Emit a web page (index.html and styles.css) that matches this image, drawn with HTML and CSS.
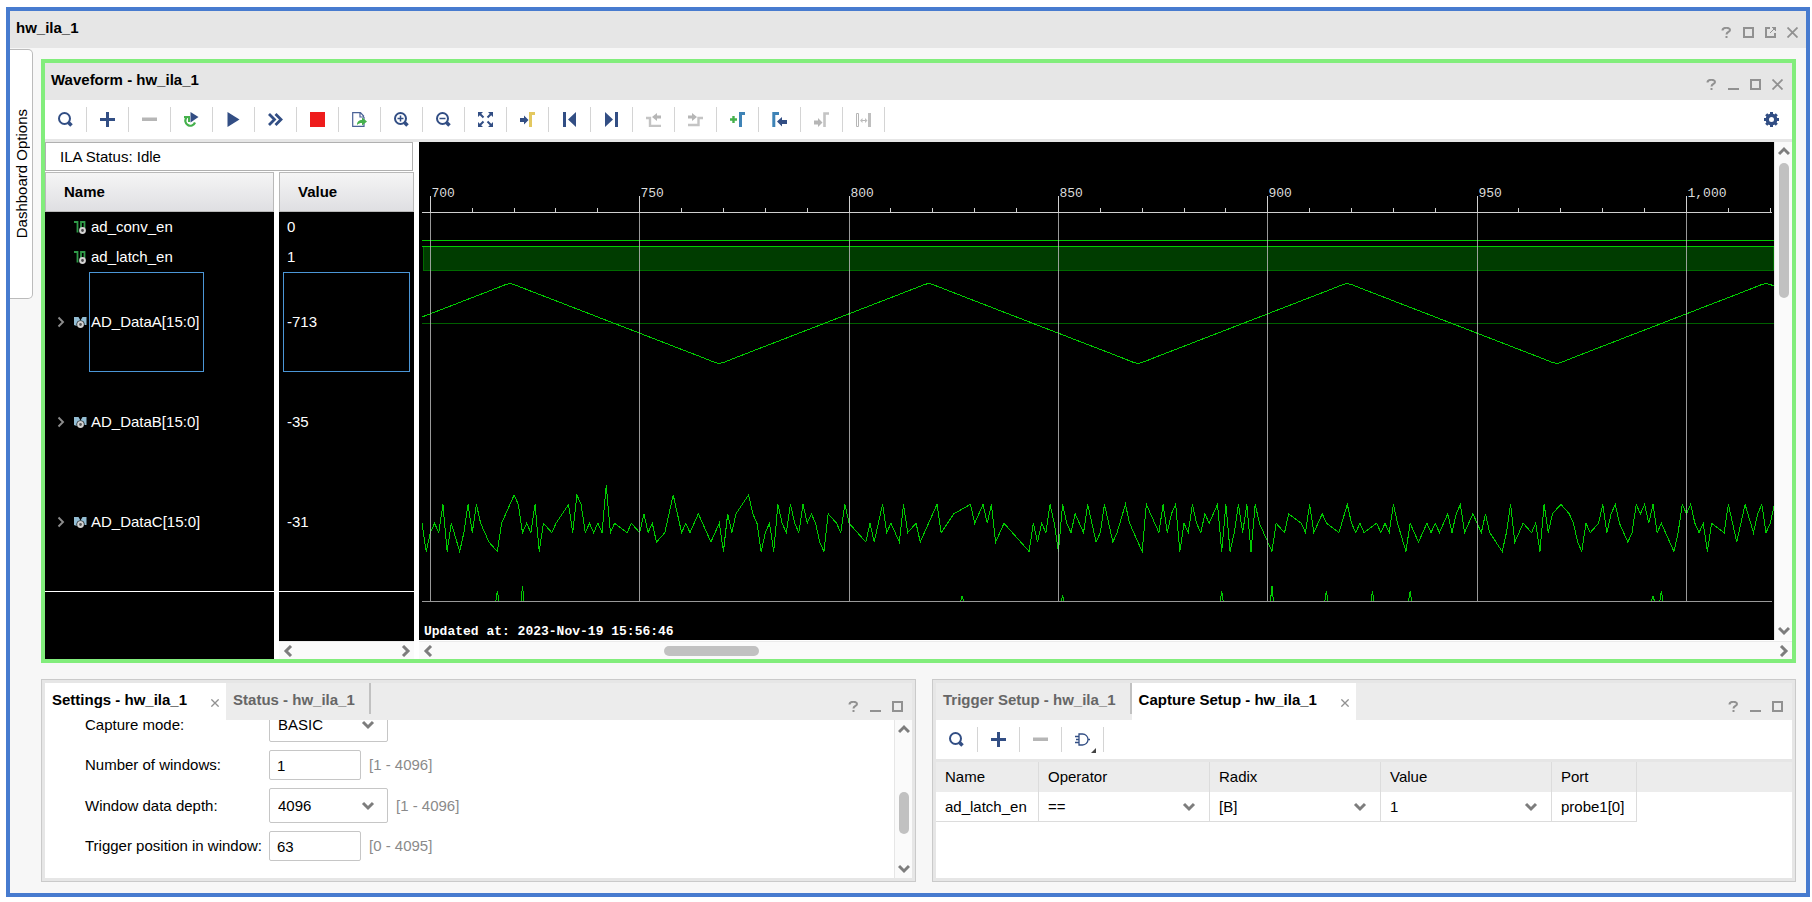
FILE: index.html
```html
<!DOCTYPE html>
<html lang="en">
<head>
<meta charset="UTF-8" />
<meta name="viewport" content="width=device-width, initial-scale=1.0" />
<title>hw_ila_1</title>
<link rel="stylesheet" href="styles.css">
</head>
<body>
<!-- shared icons -->
<svg class="sprite" aria-hidden="true">
<symbol id="i-search" viewBox="0 0 15 15"><circle cx="6.500" cy="6.500" r="5.500" fill="none" stroke="currentColor" stroke-width="2" /><path d="M10.500 10.500L13.500 13.500" stroke="currentColor" stroke-width="3.500" /></symbol>
<symbol id="i-plus" viewBox="0 0 15 15"><path d="M6 0h3v6h6v3H9v6H6V9H0V6h6z" fill="currentColor" /></symbol>
<symbol id="i-minus" viewBox="0 0 15 15"><path d="M0 5.500h15v3.500H0z" fill="currentColor" /></symbol>
<symbol id="i-help" viewBox="0 0 11 11"><path d="M1.500 3.500C1.500 0 9 0 9 3C9 5 5.500 4.800 5.500 7.500M5.500 9v2" fill="none" stroke="currentColor" stroke-width="2" /></symbol>
<symbol id="i-min" viewBox="0 0 11 11"><path d="M0 9h11v2H0z" fill="currentColor" /></symbol>
<symbol id="i-max" viewBox="0 0 11 11"><path d="M1 1h9v9H1z" fill="none" stroke="currentColor" stroke-width="2" /></symbol>
<symbol id="i-float" viewBox="0 0 11 11"><path d="M5 1H1v9h9V6" fill="none" stroke="currentColor" stroke-width="2" /><path d="M7 0h4v4zM5 6l4-4" fill="currentColor" stroke="currentColor" /></symbol>
<symbol id="i-close" viewBox="0 0 11 11"><path d="M.5.5l10 10M10.500.5l-10 10" stroke="currentColor" stroke-width="1.800" /></symbol>
<symbol id="i-up" viewBox="0 0 12 12"><path d="M1 9l5-5 5 5" fill="none" stroke="currentColor" stroke-width="3" /></symbol>
<symbol id="i-down" viewBox="0 0 12 12"><path d="M1 3l5 5 5-5" fill="none" stroke="currentColor" stroke-width="3" /></symbol>
<symbol id="i-left" viewBox="0 0 12 12"><path d="M9 1L4 6l5 5" fill="none" stroke="currentColor" stroke-width="3" /></symbol>
<symbol id="i-right" viewBox="0 0 12 12"><path d="M3 1l5 5-5 5" fill="none" stroke="currentColor" stroke-width="3" /></symbol>
<symbol id="i-expand" viewBox="0 0 8 12"><path d="M1.500 1.500L6 6l-4.500 4.500" fill="none" stroke="#8c8c8c" stroke-width="1.900" /></symbol>
<symbol id="i-wire" viewBox="0 0 13 13"><path d="M0 1h3.500v10.500M7 12V1h3.500v6" fill="none" stroke="#2f9a48" stroke-width="1.800" /><circle cx="8.500" cy="9.500" r="2.400" fill="#444" stroke="#d4d4d4" stroke-width="2" /></symbol>
<symbol id="i-bus" viewBox="0 0 13 13"><path d="M0 1h4.500l2 3.500L8.500 1h4v8H9L6.500 6 4 10.500 0 9z" fill="#93bdd3" /><circle cx="6.500" cy="8.500" r="4" fill="#000" /><circle cx="6.500" cy="8.500" r="2.400" fill="#555" stroke="#cfcfcf" stroke-width="2" /></symbol>
</svg>

<main class="window">
<header class="bar">
<h1 class="bar-title">hw_ila_1</h1>
<div class="bar-icons">
<button aria-label="Help"><svg><use href="#i-help" /></svg></button>
<button aria-label="Maximize"><svg><use href="#i-max" /></svg></button>
<button aria-label="Float"><svg><use href="#i-float" /></svg></button>
<button aria-label="Close"><svg><use href="#i-close" /></svg></button>
</div>
</header>

<div class="workspace">
<button class="side-tab"><span>Dashboard Options</span></button>

<div class="content">
<section class="wave-panel">
<header class="bar">
<h2 class="bar-title">Waveform - hw_ila_1</h2>
<div class="bar-icons">
<button aria-label="Help"><svg><use href="#i-help" /></svg></button>
<button aria-label="Minimize"><svg><use href="#i-min" /></svg></button>
<button aria-label="Maximize"><svg><use href="#i-max" /></svg></button>
<button aria-label="Close"><svg><use href="#i-close" /></svg></button>
</div>
</header>

<div class="toolbar">
<button class="tool" aria-label="Find"><svg><use href="#i-search" /></svg></button>
<button class="tool" aria-label="Add"><svg><use href="#i-plus" /></svg></button>
<button class="tool off" aria-label="Remove"><svg><use href="#i-minus" /></svg></button>
<button class="tool" aria-label="Auto re-trigger"><svg viewBox="0 0 15 15"><path d="M2.500 5.500A5 5 0 1 0 11 10.500" fill="none" stroke="#45b14c" stroke-width="2.200" /><path d="M0 4h6v6H4V6H0z" fill="#45b14c" /><path d="M6.500 0v10.500L14.500 5z" fill="currentColor" /></svg></button>
<button class="tool" aria-label="Run trigger"><svg viewBox="0 0 15 15"><path d="M1.500 0v15l12-7.500z" fill="currentColor" /></svg></button>
<button class="tool" aria-label="Run trigger immediate"><svg viewBox="0 0 15 15"><path d="M1 2l5.500 5.500L1 13M7.500 2l5.500 5.500L7.500 13" fill="none" stroke="currentColor" stroke-width="2.800" /></svg></button>
<button class="tool" aria-label="Stop trigger"><svg viewBox="0 0 15 15"><path d="M0 0h15v15H0z" fill="#ee1c1c" /></svg></button>
<button class="tool" aria-label="Export data"><svg viewBox="0 0 15 15"><path d="M12 5V14.300H.7V.7H8.500L12 4.500M8 1v4h4" fill="none" stroke="#4a6296" stroke-width="1.200" /><path d="M5 13c0-3.500 2-5 5-5V5.500l5 4-5 4V11c-2 0-3.500.5-5 2z" fill="#45b14c" /></svg></button>
<button class="tool" aria-label="Zoom in"><svg viewBox="0 0 15 15"><use href="#i-search" /><path d="M3.500 6.500h6M6.500 3.500v6" stroke="currentColor" stroke-width="1.500" /></svg></button>
<button class="tool" aria-label="Zoom out"><svg viewBox="0 0 15 15"><use href="#i-search" /><path d="M3.500 6.500h6" stroke="currentColor" stroke-width="1.500" /></svg></button>
<button class="tool" aria-label="Zoom fit"><svg viewBox="0 0 15 15"><path d="M0 0h5L0 5zM15 0h-5l5 5zM0 15h5l-5-5zM15 15h-5l5-5z" fill="currentColor" /><path d="M2 2l3.500 3.500M13 2L9.500 5.500M2 13l3.500-3.500M13 13L9.500 9.500" stroke="currentColor" stroke-width="2" /></svg></button>
<button class="tool" aria-label="Go to cursor"><svg viewBox="0 0 15 15"><path d="M0 6h4V3.500L8.500 8 4 12.500V10H0z" fill="currentColor" /><path d="M10.500 15V1.500H15" fill="none" stroke="#e3c860" stroke-width="3" /></svg></button>
<button class="tool" aria-label="Go to first"><svg viewBox="0 0 15 15"><path d="M1 0h3v15H1zM14 0v15L6 7.500z" fill="currentColor" /></svg></button>
<button class="tool" aria-label="Go to last"><svg viewBox="0 0 15 15"><path d="M11 0h3v15h-3zM1 0v15l8-7.500z" fill="currentColor" /></svg></button>
<button class="tool off" aria-label="Previous transition"><svg viewBox="0 0 15 15"><path d="M0 6h4v8h11" fill="none" stroke="#c4c4c4" stroke-width="2.400" /><path d="M6 5l5-4v2.500h4v3h-4V9z" fill="currentColor" /></svg></button>
<button class="tool off" aria-label="Next transition"><svg viewBox="0 0 15 15"><path d="M0 13h10.500V6H15" fill="none" stroke="#c4c4c4" stroke-width="2.400" /><path d="M0 3.500h4V1l5 4-5 4V6.500H0z" fill="currentColor" /></svg></button>
<button class="tool" aria-label="Add marker"><svg viewBox="0 0 15 15"><path d="M0 7.500h7M3.500 4v7" stroke="#45b14c" stroke-width="2.400" /><path d="M10.500 15V1.500H15" fill="none" stroke="#3e83b6" stroke-width="3" /></svg></button>
<button class="tool" aria-label="Previous marker"><svg viewBox="0 0 15 15"><path d="M1.800 15V1.500H7" fill="none" stroke="#3e83b6" stroke-width="3" /><path d="M5 9.500L10 5v3h5v4h-5v2.500z" fill="currentColor" /></svg></button>
<button class="tool off" aria-label="Next marker"><svg viewBox="0 0 15 15"><path d="M0 8.500h4V6l4.500 4.500L4 15v-2.500H0z" fill="currentColor" /><path d="M10.500 15V1.500H15" fill="none" stroke="#c4c4c4" stroke-width="2.600" /></svg></button>
<button class="tool off" aria-label="Swap cursors"><svg viewBox="0 0 15 15"><path d="M.5 1.500h2v13h-2zM5 8.500h5" fill="none" stroke="currentColor" stroke-width="1" /><path d="M12 1h3v14h-3zM4 8.500l2.500-2.500v5zM11.500 8.500L9 6v5z" fill="#bfbfbf" /></svg></button>
<button class="tool gear" aria-label="Settings"><svg viewBox="0 0 15 15"><path d="M7.500 0v15M0 7.500h15M2.200 2.200l10.600 10.600M12.800 2.200L2.200 12.800" stroke="currentColor" stroke-width="3" /><circle cx="7.500" cy="7.500" r="4.200" fill="#fff" stroke="currentColor" stroke-width="3.400" /></svg></button>
</div>

<div class="wave-body">
<div class="signals">
<div class="ila-status">ILA Status: Idle</div>
<div class="signal-cols">
<div class="col-name">
<div class="col-head">Name</div>
<ul class="rows">
<li class="row"><span class="twist"></span><svg class="sig"><use href="#i-wire" /></svg><span class="label">ad_conv_en</span></li>
<li class="row"><span class="twist"></span><svg class="sig"><use href="#i-wire" /></svg><span class="label">ad_latch_en</span></li>
<li class="row tall selected"><svg class="twist"><use href="#i-expand" /></svg><svg class="sig"><use href="#i-bus" /></svg><span class="label">AD_DataA[15:0]</span></li>
<li class="row tall"><svg class="twist"><use href="#i-expand" /></svg><svg class="sig"><use href="#i-bus" /></svg><span class="label">AD_DataB[15:0]</span></li>
<li class="row tall"><svg class="twist"><use href="#i-expand" /></svg><svg class="sig"><use href="#i-bus" /></svg><span class="label">AD_DataC[15:0]</span></li>
</ul>
</div>
<div class="col-value">
<div class="col-head">Value</div>
<ul class="rows">
<li class="row"><span class="label">0</span></li>
<li class="row"><span class="label">1</span></li>
<li class="row tall selected"><span class="label">-713</span></li>
<li class="row tall"><span class="label">-35</span></li>
<li class="row tall"><span class="label">-31</span></li>
</ul>
<div class="hscroll"><svg><use href="#i-left" /></svg><svg><use href="#i-right" /></svg></div>
</div>
</div>
</div>

<div class="viewer">
<div class="viewer-row">
<svg class="plot" id="plot" role="img" aria-label="Waveform"></svg>
<div class="vscroll"><svg><use href="#i-up" /></svg><div class="track"><div class="thumb wave-v"></div></div><svg><use href="#i-down" /></svg></div>
</div>
<div class="hscroll"><svg><use href="#i-left" /></svg><div class="track"><div class="thumb wave-h"></div></div><svg><use href="#i-right" /></svg></div>
</div>
</div>
</section>

<div class="bottom">
<section class="panel">
<header class="tabs">
<button class="tab active">Settings - hw_ila_1 <svg><use href="#i-close" /></svg></button>
<button class="tab divided">Status - hw_ila_1</button>
<div class="bar-icons">
<button aria-label="Help"><svg><use href="#i-help" /></svg></button>
<button aria-label="Minimize"><svg><use href="#i-min" /></svg></button>
<button aria-label="Maximize"><svg><use href="#i-max" /></svg></button>
</div>
</header>
<div class="settings">
<form class="settings-form">
<div class="field">
<label for="mode">Capture mode:</label>
<select id="mode"><option>BASIC</option></select>
</div>
<div class="field">
<label for="windows">Number of windows:</label>
<input type="text" id="windows" value="1" />
<span class="hint">[1 - 4096]</span>
</div>
<div class="field">
<label for="depth">Window data depth:</label>
<select id="depth"><option>4096</option></select>
<span class="hint">[1 - 4096]</span>
</div>
<div class="field">
<label for="position">Trigger position in window:</label>
<input type="text" id="position" value="63" />
<span class="hint">[0 - 4095]</span>
</div>
</form>
<div class="vscroll"><svg><use href="#i-up" /></svg><div class="track"><div class="thumb form-v"></div></div><svg><use href="#i-down" /></svg></div>
</div>
</section>

<section class="panel">
<header class="tabs">
<button class="tab divided">Trigger Setup - hw_ila_1</button>
<button class="tab active">Capture Setup - hw_ila_1 <svg><use href="#i-close" /></svg></button>
<div class="bar-icons">
<button aria-label="Help"><svg><use href="#i-help" /></svg></button>
<button aria-label="Minimize"><svg><use href="#i-min" /></svg></button>
<button aria-label="Maximize"><svg><use href="#i-max" /></svg></button>
</div>
</header>
<div class="toolbar">
<button class="tool" aria-label="Find"><svg><use href="#i-search" /></svg></button>
<button class="tool" aria-label="Add"><svg><use href="#i-plus" /></svg></button>
<button class="tool off" aria-label="Remove"><svg><use href="#i-minus" /></svg></button>
<button class="tool" aria-label="Capture condition"><svg class="gate" viewBox="0 0 21 21"><path d="M4 2h3.500a5.500 5.500 0 0 1 0 11H4zM0 4.500h4M1 7.500h3M0 10.500h4M13 7.500h2" fill="none" stroke="currentColor" stroke-width="1.300" /><path d="M21 16v5h-5z" fill="#444" /></svg></button>
</div>
<div class="probes">
<table>
<thead>
<tr><th class="c-name">Name</th><th class="c-pick">Operator</th><th class="c-pick">Radix</th><th class="c-pick">Value</th><th class="c-port">Port</th><th class="c-rest"></th></tr>
</thead>
<tbody>
<tr>
<td>ad_latch_en</td>
<td><select aria-label="Operator"><option>==</option></select></td>
<td><select aria-label="Radix"><option>[B]</option></select></td>
<td><select aria-label="Value"><option>1</option></select></td>
<td>probe1[0]</td>
<td class="c-rest"></td>
</tr>
</tbody>
</table>
</div>
</section>
</div>
</div>
</div>
</main>
<script src="wave.js"></script>
</body>
</html>
```
FILE: styles.css
```css
* {
  box-sizing: border-box;
}

body {
  margin: 0;
  padding: 7px 2px 5px 6px;
  min-height: 100vh;
  display: flex;
  background-color: #fff;
  color: #000;
  font-family: 'Liberation Sans', Arial, sans-serif;
  font-size: 15px;
  line-height: 18px;
}

button, input, select {
  font: inherit;
  color: inherit;
}

button {
  border: none;
  background: none;
  padding: 0;
}

svg {
  display: block;
  flex: none;
}

.sprite {
  position: absolute;
  width: 0;
  height: 0;
}

.window {
  flex: 1;
  min-width: 0;
  display: flex;
  flex-direction: column;
  border: 4px solid #477bcf;
  background-color: #f7f7f7;
}

/* title bars */
.bar {
  display: flex;
  justify-content: space-between;
  height: 37px;
  padding: 8px 8px 0 6px;
  background-color: #e6e6e6;
}

.bar-title {
  margin: 0;
  font-size: 15px;
  font-weight: bold;
}

.bar-icons {
  display: flex;
  gap: 11px;
  padding-top: 8px;
  color: #919191;
}

.bar-icons svg {
  width: 11px;
  height: 11px;
}

.bar-icons button {
  height: 11px;
}

/* workspace */
.workspace {
  flex: 1;
  display: flex;
  align-items: flex-start;
  gap: 8px;
}

.side-tab {
  width: 23px;
  height: 250px;
  margin-top: 1px;
  padding-left: 2px;
  border: 1px solid #bbb;
  border-left: none;
  border-radius: 0 5px 5px 0;
  background-color: #fff;
}

.side-tab span {
  display: block;
  margin: 0 auto;
  writing-mode: vertical-rl;
  transform: rotate(180deg);
}

.content {
  flex: 1;
  min-width: 0;
  align-self: stretch;
  display: flex;
  flex-direction: column;
  gap: 16px;
  padding: 11px 10px 11px 0;
}

.wave-panel {
  flex: 1;
  display: flex;
  flex-direction: column;
  border: 4px solid #82ed7c;
  background-color: #fff;
}

.wave-panel .bar {
  padding-right: 9px;
}

/* toolbars */
.toolbar {
  display: flex;
  align-items: center;
  height: 42px;
  border-bottom: 3px solid #e6e6e6;
  background-color: #fff;
}

.tool {
  display: flex;
  align-items: center;
  justify-content: center;
  width: 42px;
  height: 25px;
  border-right: 1px solid #d4d4d4;
  color: #324e84;
}

.tool.off {
  color: #b6b6b6;
}

.tool svg {
  width: 15px;
  height: 15px;
}

.tool.gear {
  margin-left: auto;
  border-right: none;
}

.tool .gate {
  width: 21px;
  height: 21px;
  margin: 6px 0 0 6px;
}

/* signal list */
.wave-body {
  flex: 1;
  display: flex;
  gap: 5px;
}

.signals {
  display: flex;
  flex-direction: column;
  gap: 1px;
}

.ila-status {
  height: 29px;
  margin-right: 1px;
  padding: 5px 14px;
  border: 1px solid #b0b0b0;
}

.signal-cols {
  flex: 1;
  display: flex;
  gap: 5px;
}

.col-name, .col-value {
  display: flex;
  flex-direction: column;
  background-color: #000;
  color: #fff;
}

.col-name {
  width: 229px;
}

.col-value {
  width: 135px;
}

.col-head {
  height: 40px;
  padding: 10px 18px;
  border: 1px solid #b9b9b9;
  background: linear-gradient(#f5f5f5, #dfdfe2);
  color: #000;
  font-weight: bold;
}

.rows {
  margin: 0;
  padding: 0 0 19px;
  list-style: none;
  border-bottom: 1px solid #fff;
}

.row {
  display: flex;
  align-items: center;
  height: 30px;
}

.row.tall {
  height: 100px;
}

.col-name .row {
  padding-left: 12px;
}

.col-value .row {
  padding: 0 4px;
}

.twist {
  width: 8px;
  height: 12px;
  margin-right: 9px;
}

.sig {
  width: 13px;
  height: 13px;
  margin-right: 2px;
}

.label {
  display: flex;
  align-items: center;
  height: 100%;
  padding: 0 4px 0 1px;
  border: 1px solid transparent;
}

.col-value .label {
  flex: 1;
  padding-left: 3px;
}

.selected .label {
  border-color: #4b96d6;
}

/* scrollbars */
.hscroll, .vscroll {
  display: flex;
  align-items: center;
  justify-content: space-between;
  background-color: #fafafa;
  color: #7d7d7d;
}

.hscroll {
  height: 18px;
  padding: 0 2px 0 3px;
  border-top: 1px solid #ebebeb;
}

.col-value .hscroll {
  margin-top: auto;
}

.vscroll {
  flex-direction: column;
  width: 18px;
  padding: 3px 0;
  border-left: 1px solid #e6e6e6;
}

.hscroll svg, .vscroll svg {
  width: 12px;
  height: 12px;
}

.track {
  flex: 1;
}

.thumb {
  width: 10px;
  height: 10px;
  border-radius: 5px;
  background-color: #c1c1c1;
}

.vscroll .track {
  margin: 6px 0;
}

.hscroll .track {
  margin: 0 3px;
}

.wave-v {
  height: 135px;
}

.wave-h {
  width: 95px;
  margin-left: 17%;
}

.form-v {
  height: 42px;
  margin-top: 51px;
}

/* waveform */
.viewer {
  flex: 1;
  min-width: 0;
  display: flex;
  flex-direction: column;
}

.viewer-row {
  flex: 1;
  display: flex;
  margin-bottom: 1px;
}

.plot {
  flex: 1;
  min-width: 0;
  height: 498px;
  background-color: #000;
  font-family: 'Liberation Mono', monospace;
  font-size: 13px;
}

.plot line, .plot polyline, .plot rect {
  shape-rendering: crispEdges;
}

.axis {
  stroke: #d0d0d0;
}

.grid {
  stroke: #b4b4b4;
  opacity: 0.85;
}

.trace {
  fill: none;
  stroke: #00cc00;
}

.zero {
  stroke: #005f00;
}

.band {
  fill: #003c00;
  stroke: #006a00;
}

.tick-text {
  fill: #dcdcdc;
}

.updated {
  fill: #fff;
  font-weight: bold;
}

/* bottom panels */
.bottom {
  display: grid;
  grid-template-columns: 875fr 864fr;
  gap: 16px;
}

.panel {
  min-width: 0;
  border: 1px solid #cacaca;
  padding: 3px;
  background-color: #e6e6e6;
}

.tabs {
  display: flex;
  height: 37px;
  background-color: #ececec;
}

.tab {
  display: flex;
  align-items: center;
  height: 37px;
  padding: 0 7px 3px;
  color: #666;
  font-weight: bold;
}

.tab.active {
  background-color: #fff;
  color: #000;
}

.tab svg {
  width: 8px;
  height: 8px;
  margin: 5px 0 0 24px;
  color: #919191;
}

.tab.divided {
  height: 31px;
  padding: 3px 14px 0 7px;
  border-right: 2px solid #c1c1c1;
}

.tabs .bar-icons {
  margin-left: auto;
  padding: 18px 9px 0 0;
}

.settings {
  display: flex;
  height: 158px;
  background-color: #fff;
}

/* first row is scrolled partly under the tabs */
.settings-form {
  flex: 1;
  overflow: hidden;
  display: flex;
  flex-direction: column;
  justify-content: flex-end;
  gap: 8px;
  padding: 0 0 17px 40px;
}

.field {
  flex: none;
  display: flex;
  align-items: center;
}

.field label {
  width: 184px;
  white-space: nowrap;
}

.field input {
  width: 92px;
  height: 30px;
  padding: 0 7px;
  border: 1px solid #c6c6c6;
  border-radius: 2px;
  background-color: #fff;
}

select {
  appearance: none;
  border: none;
  background: #fff url("data:image/svg+xml,%3Csvg xmlns='http://www.w3.org/2000/svg' width='14' height='10'%3E%3Cpath d='M2 2l5 5 5-5' fill='none' stroke='%237d7d7d' stroke-width='3'/%3E%3C/svg%3E") no-repeat right 12px center;
}

.field select {
  width: 119px;
  height: 35px;
  padding: 0 8px;
  border: 1px solid #c6c6c6;
  border-radius: 2px;
}

.hint {
  padding-left: 8px;
  color: #8a8a8a;
}

.probes {
  height: 116px;
  background-color: #fff;
}

table {
  width: 100%;
  table-layout: fixed;
  border-collapse: separate;
  border-spacing: 0;
}

th, td {
  height: 30px;
  padding: 0 9px;
  border-right: 1px solid #dcdcdc;
  text-align: left;
  font-weight: normal;
}

th {
  background-color: #ececec;
}

td {
  border-bottom: 1px solid #dcdcdc;
}

.c-name {
  width: 103px;
}

.c-pick {
  width: 171px;
}

.c-port {
  width: 85px;
}

.c-rest {
  border: none;
}

td select {
  display: block;
  width: 100%;
  height: 26px;
  padding: 0;
  background-position: right 4px center;
}
```
FILE: wave.js
```js
const NS = 'http://www.w3.org/2000/svg'
const plot = document.getElementById('plot')
const FIRST = 698
const LAST = 1021
const STEP = 4.187

// AD_DataC noise as sample offset and level, 0 is the highest
const noise = `0,4 1,7 2,5 3,4 4,5 5,2 6,7 7,4 9,7 10,5 11,2 12,5 13,2 14,4 16,6 18,7 19,4 22,1 23,2 24,5 25,4 26,5 27,2 28,7
29,4 31,5 32,4 35,2 36,5 37,1 38,2 39,5 40,4 41,5 42,4 43,5 44,0 45,5 46,4 49,5 50,4 52,5 53,3 54,5 55,4 56,6 58,5 60,1 62,5
63,4 64,5 66,3 69,6 71,4 72,7 73,3 74,5 75,3 78,1 79,3 80,4 81,7 82,5 83,4 84,7 85,2 86,4 87,5 88,2 89,4 90,5 91,2 92,4 93,3
94,4 95,6 96,7 97,3 99,4 100,5 101,2 102,4 106,6 107,4 108,6 110,2 111,5 112,4 114,6 115,2 116,5 118,4 119,6 123,2 124,5
127,3 131,2 132,4 134,2 135,4 136,2 137,6 139,4 145,7 146,4 147,6 148,4 149,5 150,2 151,4 152,7 153,2 154,4 155,5 156,3
158,5 159,2 161,6 162,5 163,2 165,6 166,5 168,2 169,4 172,7 173,2 176,5 177,2 178,5 179,3 180,2 181,7 182,4 183,5 184,2
185,4 186,5 187,3 188,4 190,2 191,7 192,2 193,7 194,5 195,2 196,5 197,2 198,7 199,2 200,4 203,7 204,4 206,5 207,3 210,4
211,5 212,2 213,5 215,3 216,4 219,5 221,2 222,4 223,5 224,4 225,5 228,4 229,5 230,4 231,5 232,2 233,4 235,7 236,4 238,6
240,4 241,5 242,4 243,5 245,3 246,5 247,3 248,2 249,5 251,3 253,5 254,3 255,5 258,7 259,5 260,2 261,6 263,4 265,5 266,4
267,7 268,2 269,5 270,3 272,2 274,3 275,4 276,6 277,7 278,4 279,5 281,4 282,2 283,5 284,3 285,2 286,4 288,6 289,5 290,2
291,3 292,2 293,4 294,2 295,5 296,4 299,7 300,5 301,2 302,3 303,2 304,4 305,5 306,4 307,7 308,4 311,5 312,2 314,6 316,2
318,5 319,3 320,2 321,5 322,4 323,2`
const spikes = [[18, 10], [24, 15], [129, 5], [153, 5], [191, 10], [203, 15], [216, 10], [227, 10], [236, 10], [294, 5], [296, 10]]

function add(tag, attrs, text) {
  const el = document.createElementNS(NS, tag)
  for (const key in attrs) el.setAttribute(key, attrs[key])
  if (text) el.textContent = text
  plot.appendChild(el)
}

function line(cls, x1, y1, x2, y2) {
  add('line', { class: cls, x1, y1, x2, y2 })
}

function xAt(n) {
  return 3 + n * STEP
}

// ad_conv_en stays low, ad_latch_en stays high
line('trace', 3, 98.5, 1355, 98.5)
add('rect', { class: 'band', x: 4.5, y: 104.5, width: 1350, height: 24 })
line('trace', 3, 104.5, 1355, 104.5)

// AD_DataA triangle, peaks every 100 samples
line('zero', 3, 181.5, 1355, 181.5)
const tri = ['3,175']
for (let n = 21; n < 330; n += 50) {
  const peak = (n - 21) % 100 === 0
  const y = peak ? 141.5 : 221.5
  const d = peak ? 1 : -1
  for (const [dn, dy] of [[-4, 6], [-1, 1], [0, 0], [1, 1], [4, 6]]) {
    tri.push(xAt(n + dn) + ',' + (y + d * dy))
  }
}
add('polyline', { class: 'trace', points: tri.join(' ') })

// AD_DataC
const points = noise.split(/\s+/).map(p => {
  const [n, level] = p.split(',').map(Number)
  return xAt(n) + ',' + (343.5 + level * 9.43)
})
add('polyline', { class: 'trace', points: points.join(' ') })
for (const [n, h] of spikes) {
  const x = xAt(n)
  add('polyline', { class: 'trace', points: `${x - 1.5},459 ${x},${459 - h} ${x + 1.5},459` })
}

// ruler
line('axis', 3, 70.5, 1353, 70.5)
for (let s = 700; s <= LAST; s += 10) {
  const x = Math.floor(xAt(s - FIRST)) + 0.5
  if (s % 50 === 0) {
    line('axis', x, 54, x, 70)
    line('grid', x, 71, x, 459)
    add('text', { class: 'tick-text', x: x + 1, y: 55 }, s.toLocaleString('en-US'))
  } else {
    line('axis', x, 66, x, 70)
  }
}
line('grid', 3, 459.5, 1353, 459.5)
add('text', { class: 'updated', x: 5, y: 493 }, 'Updated at: 2023-Nov-19 15:56:46')
```
